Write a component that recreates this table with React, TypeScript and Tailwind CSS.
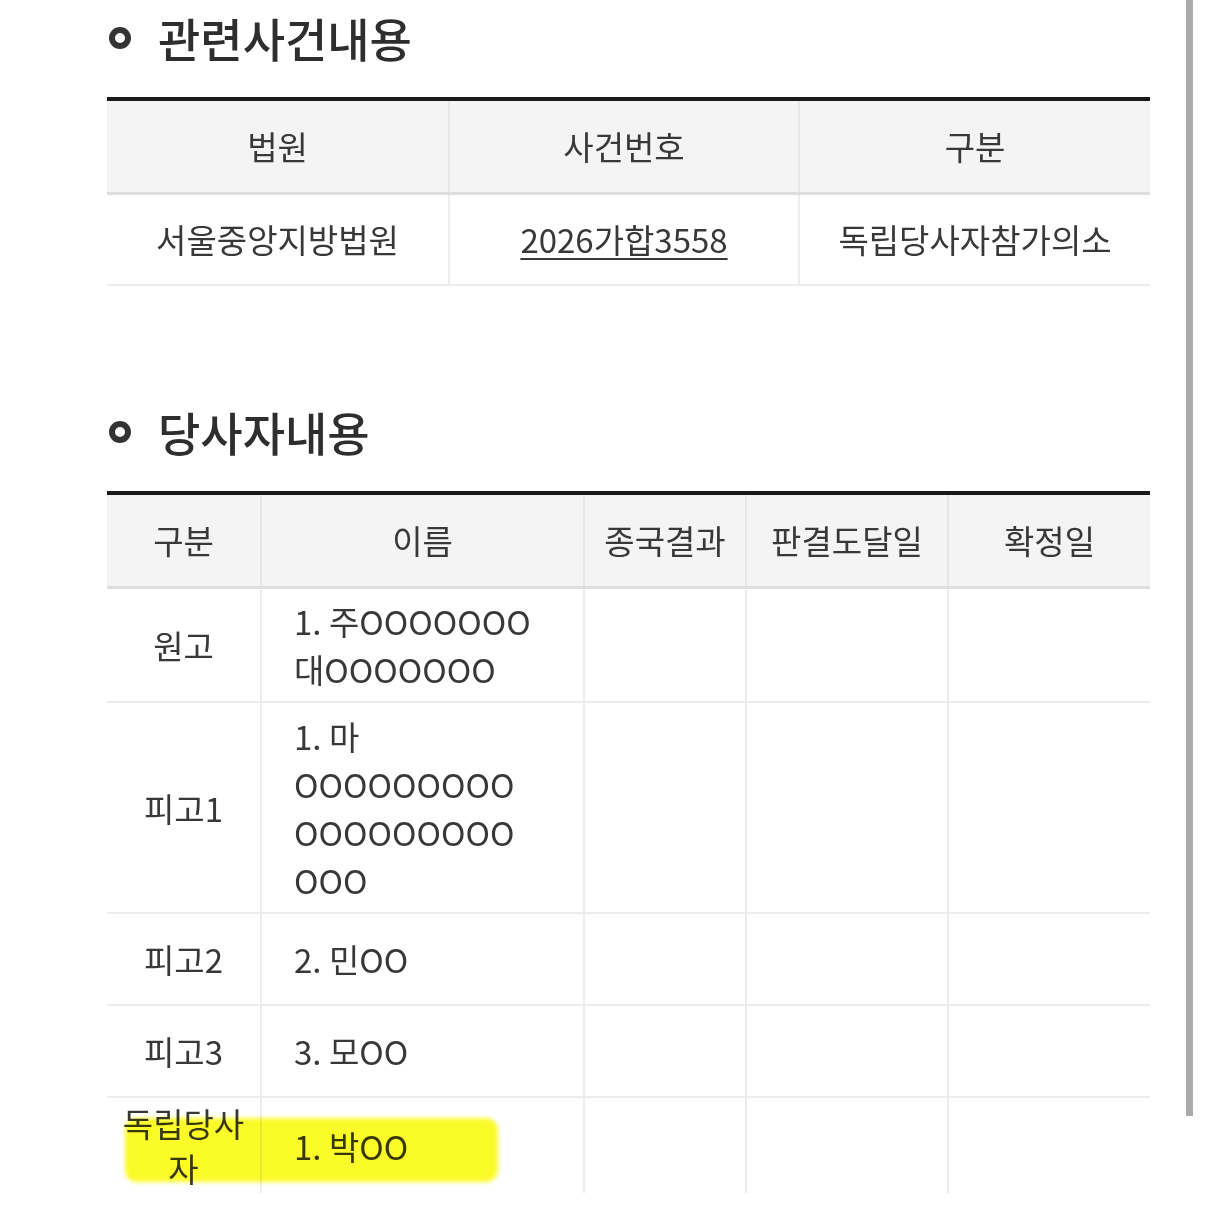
import React from "react";

const font = { fontFamily: '"Noto Sans CJK KR", "Noto Sans", sans-serif' };

function Heading({ children }: { children: React.ReactNode }) {
  return (
    <div className="flex items-center h-[80px]">
      <div className="w-[22px] h-[22px] rounded-full border-[6px] border-[#333] ml-[2px] mt-[2px]" />
      <h2 className="ml-[27px] text-[46px] leading-[56px] font-medium text-[#2e2e2e]">{children}</h2>
    </div>
  );
}

const th = "bg-[#f4f4f4] font-normal text-[#383838] text-[33px] leading-[48px] text-center border-r-2 border-r-[#e6e6e6] last:border-r-0 border-b-[3px] border-b-[#dedede] h-[92px]";
const td = "text-[#383838] text-[33px] leading-[48px] border-r-2 border-r-[#ececec] last:border-r-0 border-b-2 border-b-[#ececec]";

export default function App() {
  return (
    <div className="relative w-[1206px] h-[1210px] overflow-hidden bg-white" style={font}>
      <div className="pl-[107px] w-[1150px]">
        <div className="-mt-[3px]">
          <Heading>관련사건내용</Heading>
        </div>
        <div className="mt-[20px] border-t-4 border-[#1a1a1a]">
          <table className="w-full table-fixed border-collapse">
            <colgroup>
              <col className="w-[342px]" />
              <col className="w-[350px]" />
              <col />
            </colgroup>
            <thead>
              <tr>
                <th className={th}>법원</th>
                <th className={th}>사건번호</th>
                <th className={th}>구분</th>
              </tr>
            </thead>
            <tbody>
              <tr className="h-[92px]">
                <td className={td + " text-center"}>서울중앙지방법원</td>
                <td className={td + " text-center"}>
                  <span className="underline underline-offset-[5px] decoration-2">2026가합3558</span>
                </td>
                <td className={td + " text-center"}>독립당사자참가의소</td>
              </tr>
            </tbody>
          </table>
        </div>

        <div className="mt-[105px]">
          <Heading>당사자내용</Heading>
        </div>
        <div className="mt-[20px] border-t-4 border-[#1a1a1a]">
          <table className="w-full table-fixed border-collapse">
            <colgroup>
              <col className="w-[154px]" />
              <col className="w-[323px]" />
              <col className="w-[162px]" />
              <col className="w-[202px]" />
              <col />
            </colgroup>
            <thead>
              <tr>
                <th className={th}>구분</th>
                <th className={th}>이름</th>
                <th className={th}>종국결과</th>
                <th className={th}>판결도달일</th>
                <th className={th}>확정일</th>
              </tr>
            </thead>
            <tbody>
              <tr className="h-[115px]">
                <td className={td + " text-center"}>원고</td>
                <td className={td + " pl-[32px] pr-[8px] whitespace-nowrap"}>1. 주OOOOOOO<br />대OOOOOOO</td>
                <td className={td} />
                <td className={td} />
                <td className={td} />
              </tr>
              <tr className="h-[211px]">
                <td className={td + " text-center"}>피고1</td>
                <td className={td + " pl-[32px] pr-[8px] whitespace-nowrap"}>1. 마<br />OOOOOOOOO<br />OOOOOOOOO<br />OOO</td>
                <td className={td} />
                <td className={td} />
                <td className={td} />
              </tr>
              <tr className="h-[92px]">
                <td className={td + " text-center"}>피고2</td>
                <td className={td + " pl-[32px] pr-[8px] whitespace-nowrap"}>2. 민OO</td>
                <td className={td} />
                <td className={td} />
                <td className={td} />
              </tr>
              <tr className="h-[92px]">
                <td className={td + " text-center"}>피고3</td>
                <td className={td + " pl-[32px] pr-[8px] whitespace-nowrap"}>3. 모OO</td>
                <td className={td} />
                <td className={td} />
                <td className={td} />
              </tr>
              <tr className="h-[96px]">
                <td className="text-[#383838] text-[33px] leading-[45px] border-r-2 border-r-[#ececec] text-center px-[12px]">독립당사자</td>
                <td className="text-[#383838] text-[33px] leading-[48px] border-r-2 border-r-[#ececec] pl-[32px] pr-[8px] whitespace-nowrap">1. 박OO</td>
                <td className="border-r-2 border-r-[#ececec]" />
                <td className="border-r-2 border-r-[#ececec]" />
                <td />
              </tr>
            </tbody>
          </table>
        </div>
      </div>

      {/* highlighter mark */}
      <div className="absolute left-[125px] top-[1118px] w-[373px] h-[64px] rounded-[12px] bg-[#fbfb2a] blur-[2px] mix-blend-multiply pointer-events-none" />

      {/* scrollbar */}
      <div className="absolute left-[1186px] top-0 w-[7px] h-[1116px] bg-[#aaaaaa]" />
    </div>
  );
}
